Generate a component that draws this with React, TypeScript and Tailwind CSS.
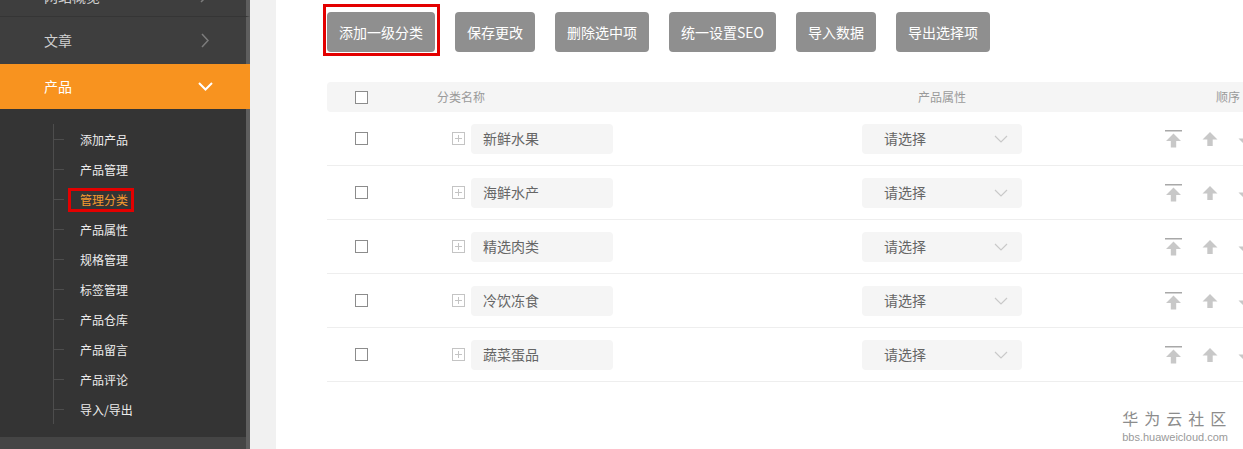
import React from "react";

const subMenu = [
  "添加产品",
  "产品管理",
  "管理分类",
  "产品属性",
  "规格管理",
  "标签管理",
  "产品仓库",
  "产品留言",
  "产品评论",
  "导入/导出",
];

const actions = ["添加一级分类", "保存更改", "删除选中项", "统一设置SEO", "导入数据", "导出选择项"];

const categories = ["新鲜水果", "海鲜水产", "精选肉类", "冷饮冻食", "蔬菜蛋品"];

const font = { fontFamily: '"Noto Sans CJK SC", "Microsoft YaHei", "Liberation Sans", sans-serif' };

function Checkbox() {
  return <span className="block h-[13px] w-[13px] border border-[#8c8c8c] bg-white" />;
}

function PlusBox() {
  return (
    <svg width="13" height="13" viewBox="0 0 13 13" className="shrink-0">
      <rect x="0.5" y="0.5" width="12" height="12" fill="none" stroke="#c4c4c4" />
      <path d="M6.5 3v7M3 6.5h7" stroke="#c4c4c4" />
    </svg>
  );
}

function ToTop() {
  return (
    <svg width="17" height="18" viewBox="0 0 17 18">
      <rect x="0" y="0" width="17" height="1.5" fill="#a8a8a8" />
      <path d="M8.5 3.5 16 11h-4.8v6.5H5.8V11H1z" fill="#c8c8c8" />
    </svg>
  );
}

function ArrowUp() {
  return (
    <svg width="16" height="16" viewBox="0 0 16 16">
      <path d="M8 1 15.5 8.5h-4.8V15H5.3V8.5H.5z" fill="#c8c8c8" />
    </svg>
  );
}

function ArrowDown() {
  return (
    <svg width="16" height="16" viewBox="0 0 16 16">
      <path d="M8 15 15.5 7.5h-4.8V1H5.3v6.5H.5z" fill="#c8c8c8" />
    </svg>
  );
}

function Sidebar() {
  return (
    <aside className="flex w-[250px] shrink-0 flex-col self-start">
      {/* cut-off item above */}
      <div className="-mt-[24px] flex h-[41px] shrink-0 items-center justify-between border-b border-r-4 border-b-[#353535] border-r-[#5e5e5e] bg-[#3e3e3e] pl-[44px] pr-[38px]">
        <span className="text-[14px] text-[#cfcfcf]">网站概览</span>
        <svg width="8" height="14" viewBox="0 0 8 14">
          <path d="M1 1l6 6-6 6" fill="none" stroke="#7c7c7c" strokeWidth="1.5" />
        </svg>
      </div>
      <div className="flex h-[47px] shrink-0 items-center justify-between border-r-4 border-r-[#5e5e5e] bg-[#3e3e3e] pl-[44px] pr-[37px]">
        <span className="text-[14px] text-[#d0d0d0]">文章</span>
        <svg width="8" height="15" viewBox="0 0 8 15">
          <path d="M1 1l6 6.5L1 14" fill="none" stroke="#7c7c7c" strokeWidth="1.5" />
        </svg>
      </div>
      <div className="flex h-[45px] shrink-0 items-center justify-between bg-[#f8931f] pl-[44px] pr-[37px]">
        <span className="text-[14px] text-white">产品</span>
        <svg width="15" height="9" viewBox="0 0 15 9">
          <path d="M1 1l6.5 6.5L14 1" fill="none" stroke="#ffffff" strokeWidth="2" />
        </svg>
      </div>
      <div className="shrink-0 border-r-4 border-r-[#5e5e5e] bg-[#343434] pb-[13px] pl-[53px] pt-[15px]">
        <ul className="border-l border-[#4d4d4d]">
          {subMenu.map((item) => {
            const active = item === "管理分类";
            return (
              <li key={item} className="flex h-[30px] items-center">
                <span className="h-px w-[10px] bg-[#4d4d4d]" />
                <span
                  className={`relative ml-[16px] text-[12px] leading-[17px] ${
                    active ? "text-[#f59b30]" : "text-[#ececec]"
                  }`}
                >
                  {item}
                  {active && (
                    <span className="absolute -bottom-[4px] -left-[12px] -right-[6px] -top-[3px] border-[3px] border-[#e30000]" />
                  )}
                </span>
              </li>
            );
          })}
        </ul>
      </div>
      <div className="h-[40px] shrink-0 border-r-4 border-r-[#5e5e5e] bg-[#454545]" />
    </aside>
  );
}

export default function App() {
  return (
    <div className="relative flex h-[449px] w-[1243px] overflow-hidden bg-[#f1f1f1]" style={font}>
      <Sidebar />

      <main className="ml-[26px] flex-1 overflow-hidden bg-white pl-[51px] pt-[12px]">
        {/* toolbar */}
        <div className="flex gap-5">
          {actions.map((label, i) => (
            <div key={label} className="relative shrink-0">
              <button className="h-10 rounded-[4px] bg-[#8f8f8f] px-3 text-[14px] text-white">{label}</button>
              {i === 0 && (
                <span className="pointer-events-none absolute -bottom-[4px] -left-[4px] -right-[5px] -top-[8px] border-[3px] border-[#e30000]" />
              )}
            </div>
          ))}
        </div>

        {/* table */}
        <div className="mt-[30px] w-[1000px]">
          <div className="flex h-[30px] items-center rounded-l-[4px] bg-[#f5f5f5] text-[12px] text-[#9a9a9a]">
            <div className="w-[110px] pl-[28px]">
              <Checkbox />
            </div>
            <div className="w-[425px]">分类名称</div>
            <div className="w-[160px] text-center">产品属性</div>
            <div className="w-[143px]" />
            <div className="pl-[51px]">顺序</div>
          </div>

          {categories.map((name) => (
            <div key={name} className="flex h-[54px] items-center border-b border-[#eeeeee]">
              <div className="w-[110px] pl-[28px]">
                <Checkbox />
              </div>
              <div className="flex w-[425px] items-center pl-[15px]">
                <PlusBox />
                <div className="ml-[6px] flex h-[30px] w-[142px] items-center rounded-[4px] bg-[#f5f5f5] pl-[12px] text-[14px] text-[#666]">
                  {name}
                </div>
              </div>
              <div className="flex h-[30px] w-[160px] items-center justify-between rounded-[4px] bg-[#f5f5f5] pl-[22px] pr-[14px] text-[14px] text-[#666]">
                <span>请选择</span>
                <svg width="14" height="8" viewBox="0 0 14 8">
                  <path d="M1 1l6 6 6-6" fill="none" stroke="#c9c9c9" strokeWidth="1.2" />
                </svg>
              </div>
              <div className="w-[143px]" />
              <div className="flex items-center gap-[20px]">
                <ToTop />
                <ArrowUp />
                <ArrowDown />
              </div>
            </div>
          ))}
        </div>
      </main>

      {/* watermark */}
      <div className="pointer-events-none absolute bottom-[5px] right-[15px] flex flex-col items-start">
        <span className="-mr-[6px] text-[16px] leading-[20px] tracking-[6px] text-[#8c8c8c]">华为云社区</span>
        <span className="mt-[2px] text-[11px] leading-[14px] text-[#9a9a9a]" style={{ fontFamily: '"Liberation Sans", sans-serif' }}>
          bbs.huaweicloud.com
        </span>
      </div>
    </div>
  );
}
